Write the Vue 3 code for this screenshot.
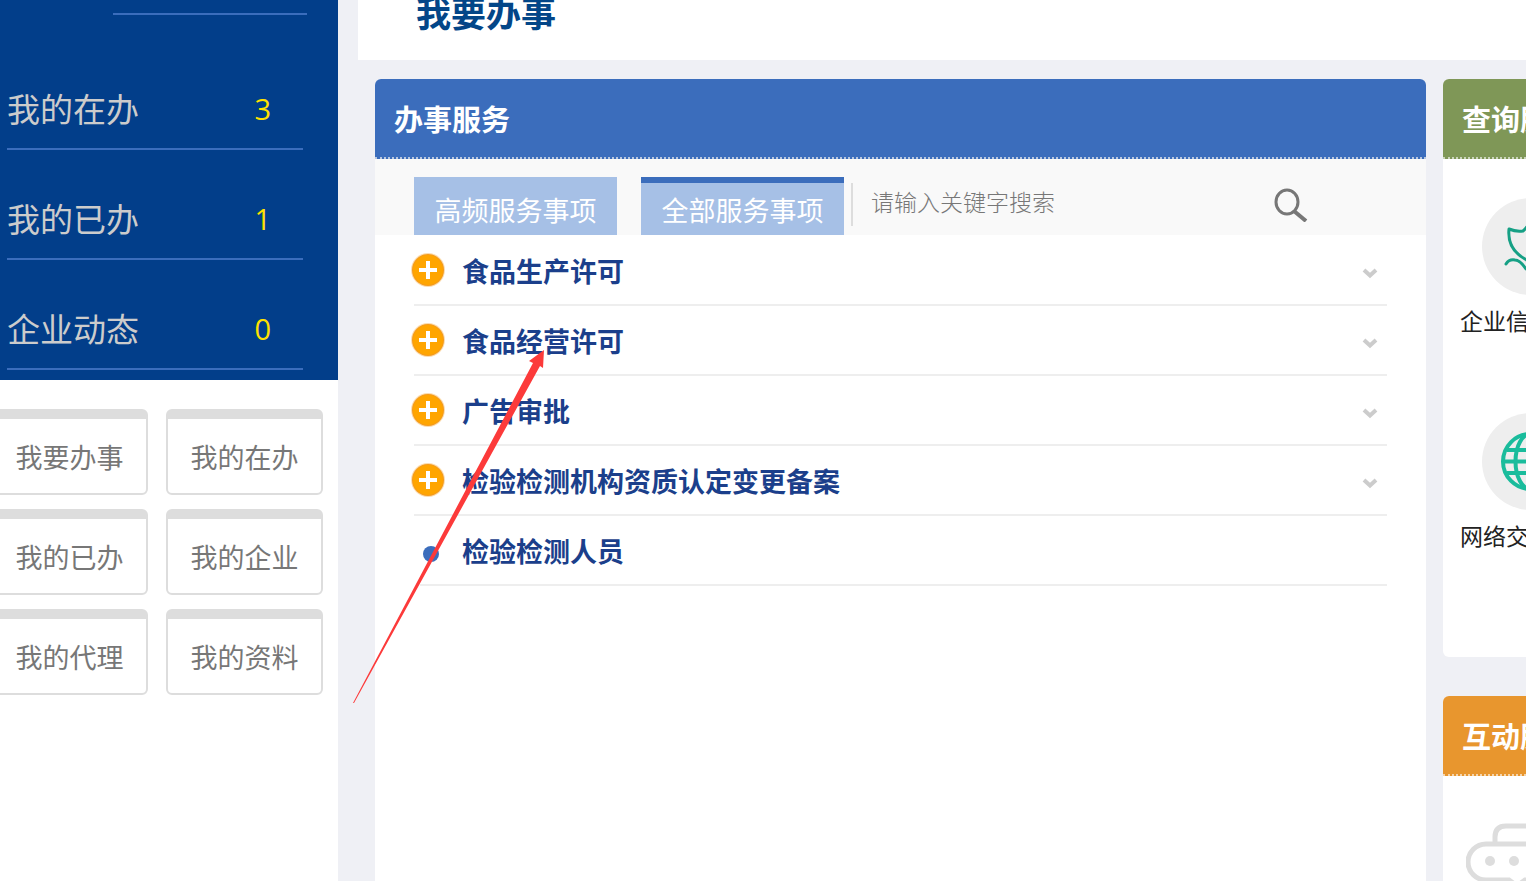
<script setup>
import { ref } from 'vue'

const stats = [
	{ label: '我的在办', count: 3 },
	{ label: '我的已办', count: 1 },
	{ label: '企业动态', count: 0 }
]

const shortcuts = ['我要办事', '我的在办', '我的已办', '我的企业', '我的代理', '我的资料']

const tabs = ['高频服务事项', '全部服务事项']
const activeTab = ref(1)
const keyword = ref('')

const services = [
	{ name: '食品生产许可', expandable: true },
	{ name: '食品经营许可', expandable: true },
	{ name: '广告审批', expandable: true },
	{ name: '检验检测机构资质认定变更备案', expandable: true },
	{ name: '检验检测人员', expandable: false }
]
</script>

<template>
	<div class="page">
		<aside class="sidebar">
			<div class="stats">
				<div class="profile-line"></div>
				<a v-for="s in stats" :key="s.label" href="#" class="stat">
					<span>{{ s.label }}</span>
					<span class="count">{{ s.count }}</span>
				</a>
			</div>
			<nav class="shortcuts">
				<button v-for="s in shortcuts" :key="s" type="button" class="shortcut">{{ s }}</button>
			</nav>
		</aside>

		<main class="main">
			<header class="page-header">
				<h1>我要办事</h1>
			</header>

			<div class="columns">
				<section class="card services">
					<h2 class="card-title blue">办事服务</h2>
					<div class="toolbar">
						<button
							v-for="(t, i) in tabs"
							:key="t"
							type="button"
							class="tab"
							:class="{ active: activeTab === i }"
							@click="activeTab = i"
						>{{ t }}</button>
						<form class="search" @submit.prevent>
							<input v-model="keyword" type="text" aria-label="请输入关键字搜索" placeholder="请输入关键字搜索" />
							<button type="submit" class="search-btn" aria-label="搜索">
								<svg width="34" height="34" viewBox="0 0 34 34" fill="none" stroke="#777">
									<ellipse cx="13" cy="14" rx="11" ry="12" stroke-width="3" />
									<path d="M20 23L32 33" stroke-width="4" />
								</svg>
							</button>
						</form>
					</div>

					<ul class="service-list">
						<li v-for="s in services" :key="s.name" :class="{ leaf: !s.expandable }">
							<button type="button" class="service">
								<svg v-if="s.expandable" class="plus" width="36" height="36" viewBox="0 0 36 36">
									<circle cx="18" cy="18" r="17" fill="#fbdcae" />
									<circle cx="18" cy="18" r="16" fill="#f49a1c" />
									<circle cx="18" cy="18" r="15" fill="#ffa500" />
									<path d="M18 9v18M9 18h18" stroke="#fff" stroke-width="4" />
								</svg>
								<span v-else class="dot"></span>
								<span class="name">{{ s.name }}</span>
								<svg v-if="s.expandable" class="chevron" width="16" height="12" viewBox="0 0 16 12">
									<path d="M2 3L8 8.500L14 3" fill="none" stroke="#ccc" stroke-width="4" />
								</svg>
							</button>
						</li>
					</ul>
				</section>

				<div class="side">
					<section class="card query">
						<h2 class="card-title green">查询服</h2>
						<a href="#" class="entry">
							<svg width="97" height="97" viewBox="0 0 97 97">
								<circle cx="48.500" cy="48.500" r="48.500" fill="#eee" />
								<g fill="none" stroke="#16a085" stroke-width="3" stroke-linejoin="round" stroke-linecap="round">
									<path d="M48.500 22Q46 29 41 33Q34 34 27 31Q25 51 43 61Q48 64 48.500 66Q49 64 54 61Q72 51 70 31Q63 34 56 33Q51 29 48.500 22Z" />
									<path d="M24 66Q27 61 33 62Q38 62 44 71M73 66Q70 61 64 62Q59 62 53 71" />
								</g>
							</svg>
							<span>企业信</span>
						</a>
						<a href="#" class="entry">
							<svg width="97" height="97" viewBox="0 0 97 97">
								<circle cx="48.500" cy="48.500" r="48.500" fill="#eee" />
								<g fill="none" stroke="#1abc9c" stroke-width="4">
									<circle cx="48.500" cy="48.500" r="27.500" />
									<ellipse cx="48.500" cy="48.500" rx="15" ry="27.500" />
									<path d="M48.500 21v55M21 48.500h55M25 37h47M25 60h47" />
								</g>
							</svg>
							<span>网络交</span>
						</a>
					</section>

					<section class="card contact">
						<h2 class="card-title orange">互动服</h2>
						<svg class="chat" width="110" height="66" viewBox="0 0 110 66" fill="none" stroke="#ddd" stroke-width="5">
							<path d="M29 20V14Q29 3 40 3H90Q101 3 101 14V36" />
							<path d="M20 21H66A18 18 0 0 1 66 57H59L51 63L43 57H20A18 18 0 0 1 20 21Z" />
							<g fill="#ddd" stroke="none">
								<circle cx="24" cy="38" r="5" />
								<circle cx="48" cy="38" r="5" />
								<circle cx="72" cy="38" r="5" />
							</g>
						</svg>
					</section>
				</div>
			</div>
		</main>

		<svg class="arrow" width="192" height="354" viewBox="0 0 192 354">
			<path d="M0 353L180 13L176 11L191 0L190 18L187 16L1 353Z" fill="#fc3a3a" />
		</svg>
	</div>
</template>

<style>
body {
	margin: 0;
	background: #eff0f5;
}
</style>

<style scoped>
.page {
	position: relative;
	display: flex;
	height: 100vh;
	overflow: hidden;
	background: #eff0f5;
	font-family: 'Noto Sans CJK SC', sans-serif;
}

button,
input {
	font-family: inherit;
	margin: 0;
	padding: 0;
	border: none;
	background: none;
}

button {
	cursor: pointer;
}

a {
	text-decoration: none;
}

h1,
h2,
ul {
	margin: 0;
	padding: 0;
}

.sidebar {
	flex: 0 0 338px;
	background: #fff;
}

.stats {
	background: #023e8a;
	padding-bottom: 10px;
}

.profile-line {
	height: 13px;
	margin: 0 31px 25px 113px;
	border-bottom: 2px solid #3b6dbc;
}

.stat {
	display: flex;
	justify-content: space-between;
	align-items: flex-end;
	box-sizing: border-box;
	height: 110px;
	margin: 0 35px 0 7px;
	padding: 0 32px 16px 0;
	border-bottom: 2px solid #3b6dbc;
	color: #ccc;
	font-size: 33px;
	line-height: 48px;
}

.count {
	color: #ffe100;
	font-family: 'Open Sans', 'Noto Sans', sans-serif;
	font-size: 29px;
	line-height: 46px;
}

.shortcuts {
	display: grid;
	grid-template-columns: 1fr 1fr;
	gap: 14px 18px;
	margin: 29px 15px 0 -9px;
}

.shortcut {
	height: 86px;
	border: 2px solid #ddd;
	border-top-width: 10px;
	border-radius: 6px;
	background: #fff;
	color: #777;
	font-size: 27px;
}

.main {
	flex: 1;
	min-width: 0;
	padding-left: 20px;
}

.page-header {
	padding: 0 58px 36px;
	background: #fff;
}

.page-header h1 {
	color: #034688;
	font-size: 35px;
	line-height: 24px;
}

.columns {
	display: flex;
	gap: 17px;
	padding: 19px 0 0 17px;
}

.card {
	border-radius: 6px;
	background: #fff;
	overflow: hidden;
}

.services {
	flex: 1;
	min-width: 0;
	min-height: 100vh;
}

.card-title {
	padding-left: 19px;
	border-bottom: 2px dotted #b9c8e0;
	color: #fff;
	font-size: 29px;
	line-height: 78px;
	white-space: nowrap;
}

.blue {
	background: #3b6dbc;
}

.green {
	border-bottom-color: #ccd5bc;
	background: #7f9757;
}

.orange {
	border-bottom-color: #f5d5ac;
	background: #e8962e;
}

.toolbar {
	display: flex;
	align-items: flex-end;
	height: 76px;
	padding-left: 39px;
	background: #f9f9f9;
}

.tab {
	flex: none;
	width: 203px;
	height: 58px;
	margin-right: 24px;
	border-top: 6px solid #a6c0e6;
	background: #a6c0e6;
	color: #fff;
	font-size: 27px;
}

.tab.active {
	margin-right: 7px;
	border-top-color: #3b6dbc;
}

.search {
	display: flex;
	flex: 1;
	align-items: center;
	height: 43px;
	margin: 0 118px 9px 0;
	border-left: 2px solid #ddd;
}

.search input {
	flex: 1;
	min-width: 0;
	padding: 0 0 8px 18px;
	color: #555;
	font-size: 23px;
	font-weight: 300;
	outline: none;
}

.search input::placeholder {
	color: #777;
	opacity: 1;
}

.search-btn {
	display: flex;
}

.service-list {
	padding: 1px 39px 0;
	list-style: none;
}

.service-list li {
	border-bottom: 2px solid #eee;
}

.service-list .leaf {
	margin-left: 6px;
}

.service {
	display: flex;
	align-items: center;
	width: 100%;
	height: 68px;
	color: #1b3f8b;
	font-size: 27px;
	font-weight: bold;
	text-align: left;
}

.plus {
	flex: none;
	margin: 0 16px 0 -4px;
}

.dot {
	flex: none;
	width: 16px;
	height: 16px;
	margin: 8px 23px 0 3px;
	border-radius: 50%;
	background: #3b6dbc;
}

.name {
	flex: 1;
}

.chevron {
	margin: 6px 9px 0 0;
}

.side {
	flex: 0 0 83px;
	min-width: 0;
}

.side .card {
	border-top-right-radius: 0;
	border-bottom-right-radius: 0;
}

.query {
	box-sizing: border-box;
	height: 578px;
	margin-bottom: 39px;
}

.entry {
	display: block;
	height: 176px;
	padding: 39px 0 0 39px;
	color: #222;
	font-size: 23px;
	line-height: 32px;
	white-space: nowrap;
}

.entry svg {
	display: block;
	margin-bottom: 9px;
}

.entry span {
	display: block;
	margin-left: -22px;
}

.contact {
	height: 400px;
}

.chat {
	display: block;
	margin: 47px 0 0 23px;
}

/* annotation arrow lies over the list */
.arrow {
	position: absolute;
	left: 353px;
	top: 350px;
	pointer-events: none;
}
</style>
